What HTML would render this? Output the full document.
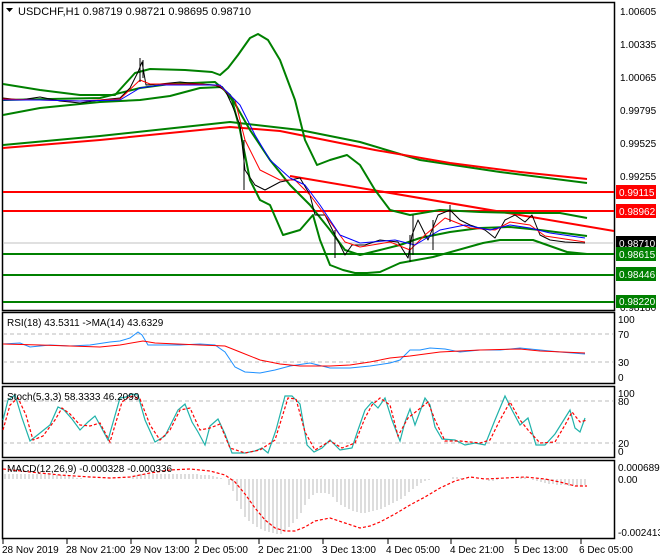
<!DOCTYPE html>
<html><head><meta charset="utf-8"><style>
html,body{margin:0;padding:0;background:#fff;}
svg{display:block;font-family:"Liberation Sans",sans-serif;}
</style></head><body>
<svg width="660" height="560" viewBox="0 0 660 560" xmlns="http://www.w3.org/2000/svg">
<rect width="660" height="560" fill="#fff"/>
<!-- panel borders -->
<g fill="none" stroke="#000" stroke-width="1.5">
<rect x="2.5" y="2.5" width="612" height="308"/>
<rect x="2.5" y="312.5" width="612" height="71"/>
<rect x="2.5" y="386.5" width="612" height="71"/>
<rect x="2.5" y="460.5" width="612" height="78"/>
</g>
<!-- main chart -->
<g fill="none" stroke-linejoin="round">
<line x1="3" y1="243" x2="614" y2="243" stroke="#c0c0c0" stroke-width="1"/>
<line x1="3" y1="192" x2="614" y2="192" stroke="#f00" stroke-width="2"/>
<line x1="3" y1="211" x2="614" y2="211" stroke="#f00" stroke-width="2"/>
<line x1="3" y1="254" x2="614" y2="254" stroke="#008000" stroke-width="2"/>
<line x1="3" y1="275" x2="614" y2="275" stroke="#008000" stroke-width="2"/>
<line x1="3" y1="302" x2="614" y2="302" stroke="#008000" stroke-width="2"/>
<!-- long MAs -->
<polyline stroke="#008000" stroke-width="2" points="3,145 100,136 230,122 300,130 360,142 420,160 500,172 587,183"/>
<polyline stroke="#f00" stroke-width="2" points="3,148 100,140 230,127 280,131 375,150 450,163 520,172 587,179"/>
<line x1="290" y1="176" x2="614" y2="231" stroke="#f00" stroke-width="2"/>
<!-- bollinger -->
<polyline stroke="#008000" stroke-width="2" points="3,84 40,90 80,95 115,95 135,73 150,69 185,70 212,72 220,75 228,68 238,55 250,38 258,34 268,40 280,60 295,100 305,140 317,165 330,160 347,155 360,165 375,190 390,210 410,215 440,210 480,212 520,213 560,213 587,218"/>
<polyline stroke="#008000" stroke-width="2" points="3,115 40,108 100,102 140,100 170,96 200,88 222,87 232,100 240,130 250,180 260,200 270,205 283,235 300,230 313,215 320,240 330,265 343,270 355,273 367,273 380,272 400,263 433,257 483,243 500,240 533,240 567,252 587,254"/>
<polyline stroke="#008000" stroke-width="2" points="3,100 50,99 100,98 140,88 170,84 215,82 230,95 250,130 270,160 290,185 310,205 330,230 345,250 360,255 380,250 400,245 420,238 450,232 480,228 510,227 540,230 587,236"/>
<!-- price path -->
<polyline stroke="#000" stroke-width="1" points="3,98 20,100 40,97 60,101 80,103 100,100 120,98 130,88 138,72 142,62 146,85 160,84 180,82 200,84 215,85 225,90 232,105 240,125 245,170 255,185 265,190 280,182 290,180 300,178 310,195 315,215 325,215 335,235 345,255 352,245 365,245 380,240 398,242 408,258 412,235 418,220 428,240 438,215 450,210 460,220 470,225 485,230 495,238 505,220 515,215 525,222 532,215 540,235 550,240 565,242 585,243"/>
<polyline stroke="#f00" stroke-width="1" points="3,99 40,100 80,101 120,99 140,80 150,84 200,84 220,86 235,100 245,140 260,170 280,180 295,180 310,195 325,215 345,242 360,247 390,242 410,250 425,235 445,218 470,228 495,230 510,222 530,225 545,236 585,242"/>
<polyline stroke="#00f" stroke-width="1" points="3,100 40,100 80,101 120,100 140,88 160,85 220,85 240,105 255,135 270,160 290,178 305,185 320,205 340,235 360,243 395,240 415,245 440,230 465,225 490,230 510,225 530,228 550,233 585,238"/>
</g>
<!-- candles hints -->
<g stroke="#000" stroke-width="1">
<line x1="140" y1="58" x2="140" y2="82"/><line x1="143" y1="60" x2="143" y2="78"/>
<line x1="244" y1="140" x2="244" y2="190"/><line x1="335" y1="230" x2="335" y2="258"/>
<line x1="410" y1="235" x2="410" y2="262"/><line x1="413" y1="215" x2="413" y2="255"/>
<line x1="433" y1="220" x2="433" y2="250"/><line x1="450" y1="205" x2="450" y2="222"/>
</g>
<!-- header -->
<path d="M6,8 L13,8 L9.5,12 Z" fill="#000"/>
<text x="18" y="15" font-size="11" fill="#000">USDCHF,H1  0.98719 0.98721 0.98695 0.98710</text>
<!-- price axis -->
<g font-size="10" fill="#000">
<text x="620" y="15">1.00605</text>
<text x="620" y="48">1.00335</text>
<text x="620" y="81">1.00065</text>
<text x="620" y="114">0.99795</text>
<text x="620" y="147">0.99525</text>
<text x="620" y="180">0.99255</text>
<text x="620" y="311">0.98180</text>
</g>
<g font-size="10" fill="#fff">
<rect x="616" y="185" width="40" height="14" fill="#f00"/><text x="619" y="196">0.99115</text>
<rect x="616" y="204" width="40" height="14" fill="#f00"/><text x="619" y="215">0.98962</text>
<rect x="616" y="236" width="40" height="14" fill="#000"/><text x="619" y="247">0.98710</text>
<rect x="616" y="247" width="40" height="14" fill="#008000"/><text x="619" y="258">0.98615</text>
<rect x="616" y="267" width="40" height="14" fill="#008000"/><text x="619" y="278">0.98446</text>
<rect x="616" y="295" width="40" height="13" fill="#008000"/><text x="619" y="305">0.98220</text>
</g>
<!-- RSI -->
<g fill="none">
<line x1="3" y1="334" x2="614" y2="334" stroke="#bbb" stroke-dasharray="4,3"/>
<line x1="3" y1="362" x2="614" y2="362" stroke="#bbb" stroke-dasharray="4,3"/>
<polyline stroke="#1e90ff" stroke-width="1" points="3,344 20,343 30,347 40,346 50,345 70,346 90,345 110,342 120,341 130,338 138,332 142,335 148,345 160,345 180,345 200,344 215,345 225,352 235,367 245,372 260,373 275,370 290,366 310,363 330,368 350,368 370,366 390,363 400,360 410,350 420,350 430,348 445,349 460,352 480,350 500,350 520,348 540,350 560,352 585,354"/>
<polyline stroke="#f00" stroke-width="1" points="3,344 40,345 70,346 100,347 120,345 143,341 155,343 200,345 225,346 240,352 260,360 280,364 300,366 330,366 350,365 370,362 390,358 410,356 440,352 480,350 520,349 540,351 585,353"/>
</g>
<text x="7" y="326" font-size="10" fill="#000">RSI(18) 43.5311  -&gt;MA(14) 43.6329</text>
<g font-size="10" fill="#000">
<text x="618" y="323">100</text><text x="618" y="338">70</text><text x="618" y="366">30</text><text x="618" y="381">0</text>
</g>
<!-- Stoch -->
<g fill="none">
<line x1="3" y1="401" x2="614" y2="401" stroke="#bbb" stroke-dasharray="4,3"/>
<line x1="3" y1="443" x2="614" y2="443" stroke="#bbb" stroke-dasharray="4,3"/>
<polyline stroke="#20b2aa" stroke-width="1.2" points="3,420 8,400 15,395 22,418 30,441 40,433 50,425 58,407 64,410 72,419 80,430 88,422 95,416 100,425 108,440 120,398 126,397 132,394 138,395 145,420 155,442 165,436 172,422 178,410 185,404 192,422 198,432 205,445 210,426 218,419 225,434 232,453 245,453 255,451 262,448 268,453 276,430 285,396 292,396 300,404 307,445 314,452 322,448 330,440 340,450 352,448 358,430 365,410 372,402 378,408 385,398 392,420 400,441 405,422 410,409 415,425 425,398 430,405 435,427 442,439 455,440 465,445 475,443 485,445 495,420 505,396 512,410 520,425 528,418 536,445 545,445 555,434 565,418 570,410 575,428 580,432 585,418"/>
<polyline stroke="#f00" stroke-width="1.2" stroke-dasharray="3,2" points="3,430 10,405 18,398 26,415 33,440 43,436 55,420 62,408 70,414 80,425 90,426 100,423 110,442 122,402 130,396 140,399 150,425 160,440 170,430 180,410 190,408 200,430 210,428 220,424 230,448 245,453 260,450 275,440 288,398 296,399 305,432 315,450 330,441 342,448 355,443 365,418 372,405 380,398 390,405 398,436 408,418 418,410 428,402 435,420 445,441 460,441 480,443 490,440 500,420 510,402 520,420 528,430 540,443 555,442 565,425 572,412 580,422 587,420"/>
</g>
<text x="7" y="400" font-size="10" fill="#000">Stoch(5,3,3) 58.3333 46.2099</text>
<g font-size="10" fill="#000">
<text x="618" y="397">100</text><text x="618" y="405">80</text><text x="618" y="447">20</text><text x="618" y="455">0</text>
</g>
<!-- MACD -->
<g stroke="#bbb" stroke-width="1">
<path d="M5,479v-5 M9,479v-5 M13,479v-5 M17,479v-5 M21,479v-5 M25,479v-5 M29,479v-5 M33,479v-5 M37,479v-5 M41,479v-5 M45,479v-5 M49,479v-5 M53,479v-4 M57,479v-4 M61,479v-4 M65,479v-3 M69,479v-3 M73,479v-2 M77,479v-1 M81,479v-1 M133,479v-3 M137,479v-4 M141,479v-5 M145,479v-5 M149,479v-5 M153,479v-5 M157,479v-5 M161,479v-5 M165,479v-5 M169,479v-5 M173,479v-5 M177,479v-5 M181,479v-5 M185,479v-5 M189,479v-5 M193,479v-5 M197,479v-5 M201,479v-4 M205,479v-4 M209,479v-4 M213,479v-3 M217,479v-2 M221,479v-1 M229,479v6 M233,479v12 M237,479v22 M241,479v30 M245,479v38 M249,479v42 M253,479v45 M257,479v48 M261,479v50 M265,479v52 M269,479v53 M273,479v54 M277,479v55 M281,479v55 M285,479v52 M289,479v48 M293,479v44 M297,479v40 M301,479v34 M305,479v26 M309,479v20 M313,479v16 M317,479v14 M321,479v14 M325,479v14 M329,479v15 M333,479v18 M337,479v23 M341,479v26 M345,479v28 M349,479v30 M353,479v32 M357,479v33 M361,479v34 M365,479v34 M369,479v33 M373,479v32 M377,479v31 M381,479v30 M385,479v28 M389,479v26 M393,479v24 M397,479v22 M401,479v20 M405,479v17 M409,479v13 M413,479v10 M417,479v7 M421,479v4 M425,479v2 M429,479v1 M453,479v-2 M457,479v-2 M461,479v-1 M489,479v2 M493,479v2 M497,479v1 M521,479v-2 M525,479v-2 M533,479v1 M537,479v2 M541,479v3 M545,479v4 M549,479v5 M553,479v5 M557,479v6 M561,479v6 M565,479v6 M569,479v7 M573,479v7 M577,479v7 M581,479v7 M585,479v6"/>
</g>
<polyline fill="none" stroke="#f00" stroke-width="1.2" stroke-dasharray="3,2" points="3,469 30,472 60,475 90,477 110,478 130,477 150,473 170,470 190,469 210,471 225,475 235,482 245,494 255,508 265,520 275,528 285,531 295,531 305,527 315,521 330,518 345,523 360,528 370,526 380,522 395,514 410,505 425,497 440,488 455,481 470,477 485,479 505,478 525,477 545,479 560,482 575,486 587,486"/>
<text x="7" y="472" font-size="10" fill="#000">MACD(12,26,9) -0.000328 -0.000336</text>
<g font-size="10" fill="#000">
<text x="618" y="471">0.000689</text><text x="618" y="483">0.00</text><text x="618" y="536">-0.002413</text>
</g>
<!-- time axis -->
<g stroke="#000" stroke-width="1">
<path d="M3,539v5 M67,539v5 M131,539v5 M196,539v5 M259,539v5 M323,539v5 M388,539v5 M451,539v5 M516,539v5 M581,539v5"/>
</g>
<g font-size="10" fill="#000">
<text x="2" y="553">28 Nov 2019</text>
<text x="66" y="553">28 Nov 21:00</text>
<text x="130" y="553">29 Nov 13:00</text>
<text x="194" y="553">2 Dec 05:00</text>
<text x="258" y="553">2 Dec 21:00</text>
<text x="322" y="553">3 Dec 13:00</text>
<text x="386" y="553">4 Dec 05:00</text>
<text x="450" y="553">4 Dec 21:00</text>
<text x="514" y="553">5 Dec 13:00</text>
<text x="579" y="553">6 Dec 05:00</text>
</g>
</svg>
</body></html>
